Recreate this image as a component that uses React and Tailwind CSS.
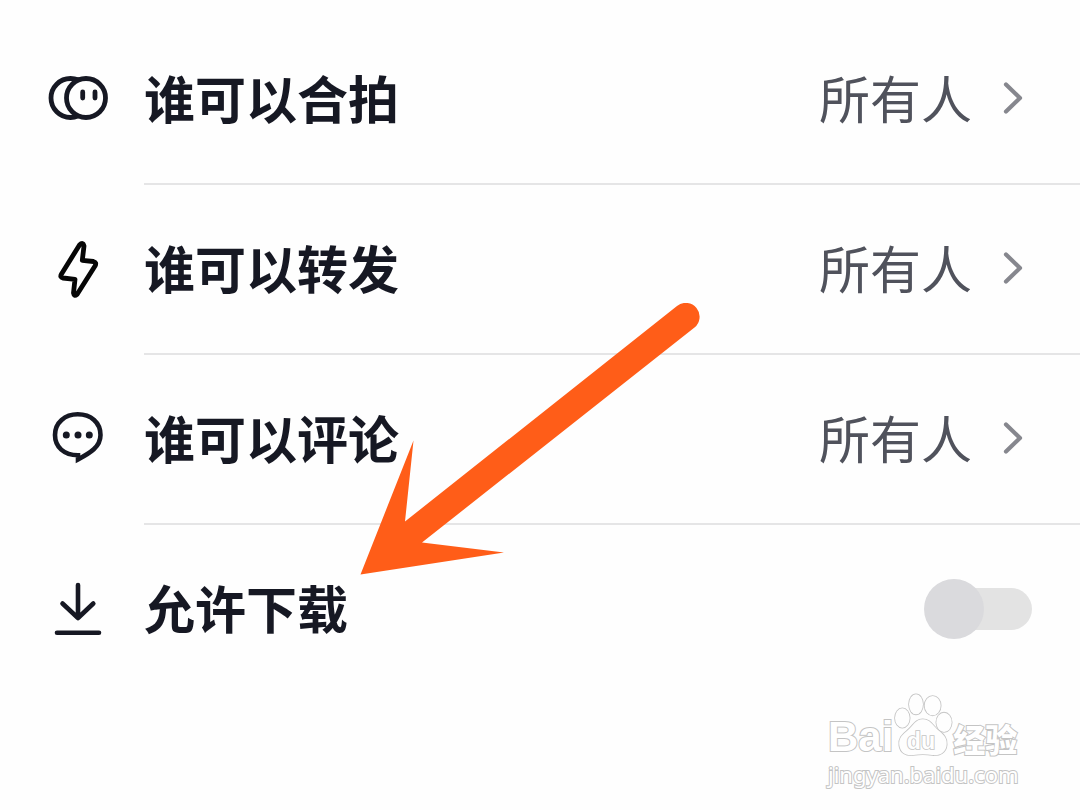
import React, { useState } from 'react';

const DuetIcon = () => (
  <svg className="w-[60px] h-[60px] shrink-0" viewBox="0 0 60 60" fill="none" stroke="#161823" strokeWidth="4.8" strokeLinecap="round" aria-hidden="true">
    <circle cx="22.5" cy="28" r="19.5" />
    <circle cx="38" cy="28" r="19.5" fill="#fefefe" />
    <path d="M34.7 22v6M47 22v6" />
  </svg>
);

const BoltIcon = () => (
  <svg className="w-[60px] h-[60px] shrink-0" viewBox="0 0 60 60" fill="none" stroke="#060606" strokeWidth="4.8" strokeLinejoin="round" aria-hidden="true">
    <path d="M31.5 5 13.5 34Q11.5 37.5 15 38L27 39.3 25.5 53Q26 57 29 54.5L47 26Q49 22.3 45.5 21.5L34.3 20.3 36 6Q35 1.5 31.5 5Z" />
  </svg>
);

const CommentIcon = () => (
  <svg className="w-[60px] h-[60px] shrink-0" viewBox="0 0 60 60" fill="none" stroke="#161823" strokeWidth="4.6" aria-hidden="true">
    <path d="M30 45.2C16 45.2 7 37 7 25 7 12.5 17 4.3 29.7 4.3 43 4.3 52.5 12.5 52.5 25 52.5 37 42 43 30 49.5Z" />
    <g fill="#161823" stroke="none">
      <circle cx="18.3" cy="25" r="3.5" />
      <circle cx="30" cy="25" r="3.5" />
      <circle cx="41.3" cy="25" r="3.5" />
    </g>
  </svg>
);

const DownloadIcon = () => (
  <svg className="w-[60px] h-[60px] shrink-0" viewBox="0 0 60 60" fill="none" stroke="#161823" strokeWidth="4.6" strokeLinecap="round" strokeLinejoin="round" aria-hidden="true">
    <path d="M30 5V38M14.5 23.5 30 38 45.3 23.5M9 52.7H51" />
  </svg>
);

const Chevron = () => (
  <svg className="w-8 h-10 shrink-0" viewBox="0 0 32 40" fill="none" stroke="#86878e" strokeWidth="4.2" strokeLinecap="round" strokeLinejoin="round" aria-hidden="true">
    <path d="M6 5.5 20 19 6 32.5" />
  </svg>
);

const settings = [
  { label: '谁可以合拍', value: '所有人', Icon: DuetIcon },
  { label: '谁可以转发', value: '所有人', Icon: BoltIcon },
  { label: '谁可以评论', value: '所有人', Icon: CommentIcon },
];

const SettingRow = ({ label, value, Icon }) => (
  <li>
    <button type="button" className="w-full flex items-center pl-12 gap-9 text-left cursor-pointer">
      <Icon />
      <span className="flex-1 h-[170px] flex items-center border-b-2 border-[#e5e5e6] pr-12">
        <span className="pb-1 font-bold text-[#161823]">{label}</span>
        <span className="pb-1 ml-auto mr-7 text-[#50525c]">{value}</span>
        <Chevron />
      </span>
    </button>
  </li>
);

const DownloadRow = () => {
  const [allowed, setAllowed] = useState(false);

  return (
    <li className="flex items-center pl-12 gap-9">
      <DownloadIcon />
      <label className="flex-1 h-[170px] flex items-center justify-between border-b-2 border-transparent pr-12 cursor-pointer">
        <span className="pb-1 font-bold text-[#161823]">允许下载</span>
        <span className="relative flex items-center w-[108px] h-[60px]">
          <input
            type="checkbox"
            role="switch"
            className="peer absolute inset-0 opacity-0 cursor-pointer"
            checked={allowed}
            onChange={(e) => setAllowed(e.target.checked)}
          />
          <span className="ml-2 flex-1 h-[42px] rounded-full bg-[#e3e3e3] peer-checked:bg-[#8ce0b4]" />
          <span className="absolute left-0 size-[60px] rounded-full bg-[#dadadd] transition peer-checked:translate-x-12 peer-checked:bg-[#20c06c]" />
        </span>
      </label>
    </li>
  );
};

const Arrow = () => (
  <svg className="absolute left-[360px] top-[303px] w-[345px] h-[272px] pointer-events-none" viewBox="0 0 345 272" aria-hidden="true">
    <path fill="#ff5d18" d="M.5 271.5 53.5 137.5 45 218.5 317 3A13.8 13.8 0 0 1 334.5 24.5L62 239.5 144 249.5Z" />
  </svg>
);

const Watermark = () => (
  <footer className="flex justify-end pr-14 text-white [-webkit-text-stroke:2px_#c4c4c4] [paint-order:stroke_fill]">
    <div className="w-[196px]">
      <div className="flex items-end h-[62px]">
        <span className="text-[42px] leading-10 font-bold font-['Liberation_Sans',sans-serif]">Bai</span>
        <svg className="w-[60px] h-16 shrink-0" viewBox="248 40 180 192" fill="#fefefe" stroke="#c4c4c4" strokeWidth="5" aria-hidden="true">
          <ellipse cx="276" cy="115" rx="22" ry="29" />
          <ellipse cx="317" cy="74" rx="21" ry="30" />
          <ellipse cx="367" cy="78" rx="24" ry="29" />
          <ellipse cx="401" cy="128" rx="23" ry="29" />
          <path d="M337 119C316 119 309 137 294 150 278 164 264 173 267 197 270 220 287 229 309 226 328 223 347 223 366 226 389 229 407 218 409 195 411 172 397 163 382 150 366 136 359 119 337 119Z" />
          <text x="289" y="208" fontSize="70" fontWeight="bold" className="font-['Liberation_Sans',sans-serif] [-webkit-text-stroke:7px_#c4c4c4]">du</text>
        </svg>
        <span className="text-[32px] leading-8 font-black whitespace-nowrap font-['Liberation_Sans','Noto_Sans_CJK_SC',sans-serif]">经验</span>
      </div>
      <p className="pt-1 text-[22px] leading-[26px] font-['Noto_Sans',sans-serif]">jingyan.baidu.com</p>
    </div>
  </footer>
);

const App = () => {
  return (
    <main className="relative min-h-screen bg-[#fefefe] pt-[15px] overflow-hidden text-[51px] leading-[60px] font-['Noto_Sans_CJK_SC',sans-serif]">
      <ul>
        {settings.map((item) => (
          <SettingRow key={item.label} {...item} />
        ))}
        <DownloadRow />
      </ul>
      <Watermark />
      <Arrow />
    </main>
  );
};

export default App;
